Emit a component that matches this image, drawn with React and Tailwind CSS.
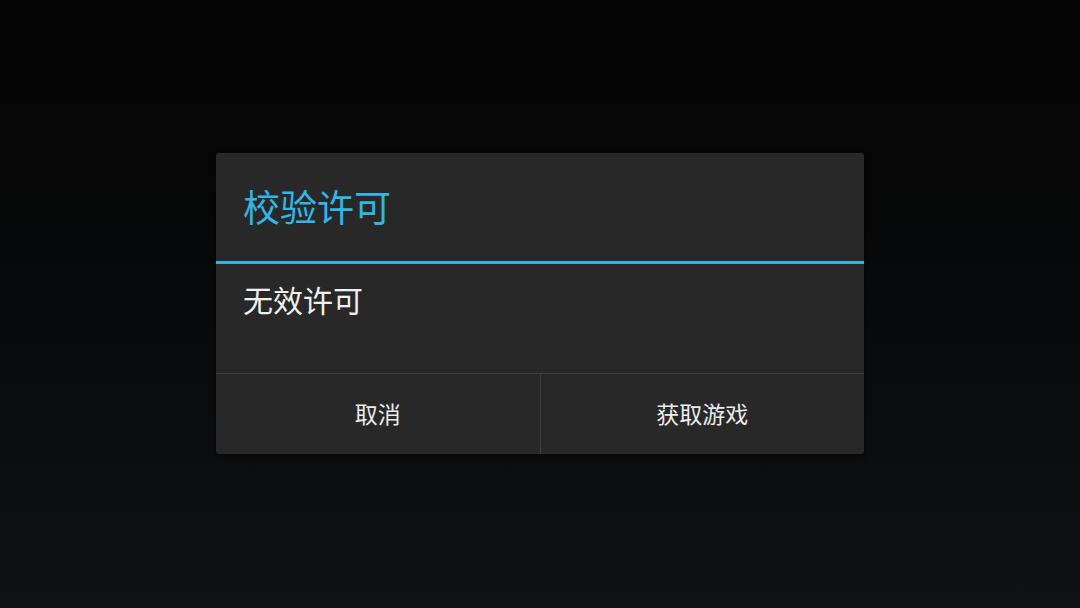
import React from "react";

const LicenseDialog = () => {
  return (
    <div className="w-[648px] rounded-[3px] bg-[#282828] shadow-[0_2px_6px_rgba(0,0,0,0.6)] overflow-hidden">
      {/* Title */}
      <div className="h-[108px] flex items-center pl-[27px] pb-[2px]">
        <h2 className="text-[37px] leading-none text-[#33b5e5]">校验许可</h2>
      </div>
      <div className="h-[3px] bg-[#33b5e5]" />

      {/* Message */}
      <div className="h-[109px] pl-[27px] pt-[20px]">
        <p className="text-[30px] leading-none text-[#f0f0f0]">无效许可</p>
      </div>

      {/* Buttons */}
      <div className="flex h-[81px] border-t border-[#3c3c3c]">
        <button className="flex-1 flex items-center justify-center pb-[2px] text-[23px] text-[#ececec] border-r border-[#3c3c3c]">
          取消
        </button>
        <button className="flex-1 flex items-center justify-center pb-[2px] text-[23px] text-[#ececec]">
          获取游戏
        </button>
      </div>
    </div>
  );
};

export default function App() {
  return (
    <div
      className="w-[1080px] h-[608px] flex justify-center pt-[153px] bg-gradient-to-b from-[#040404] to-[#0f1114]"
      style={{ fontFamily: '"Noto Sans CJK SC", "Noto Sans", sans-serif' }}
    >
      <div>
        <LicenseDialog />
      </div>
    </div>
  );
}
